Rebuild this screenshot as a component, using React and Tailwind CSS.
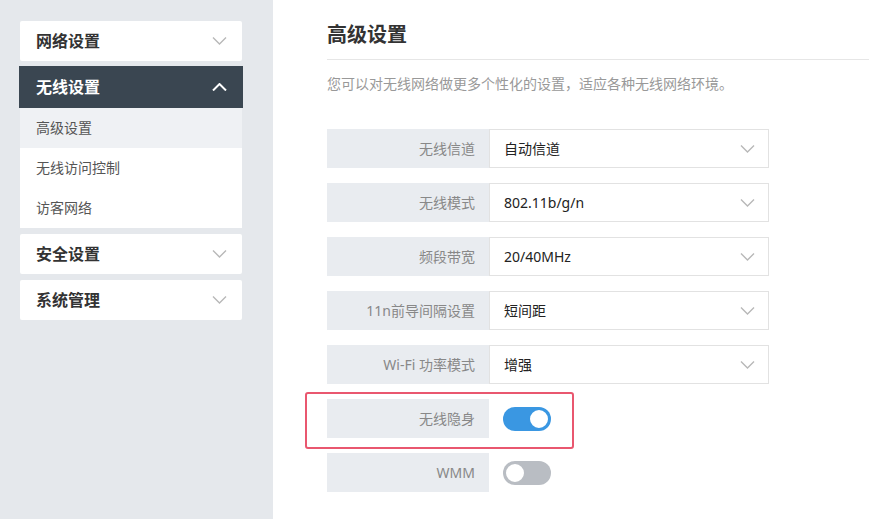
import React from 'react'

const Chevron = ({ up = false, color = '#b8b8b8' }) => (
  <svg width="15" height="8" viewBox="0 0 15 8" fill="none">
    <polyline
      points={up ? '1,7.5 7.5,1 14,7.5' : '1,0.5 7.5,7 14,0.5'}
      stroke={color}
      strokeWidth={up ? 2 : 1.4}
    />
  </svg>
)

const NavCard = ({ title, className = '' }) => (
  <div className={`flex h-[40px] items-center justify-between rounded-[2px] bg-white pl-[16px] pr-[15px] ${className}`}>
    <span className="text-[16px] font-bold leading-[22px] text-[#333]">{title}</span>
    <Chevron />
  </div>
)

const SelectRow = ({ label, value }) => (
  <div className="flex h-[39px]">
    <div className="flex w-[162px] items-center justify-end bg-[#e9ecf0] pr-[14px] text-[14px] text-[#888]">
      {label}
    </div>
    <div className="flex w-[280px] items-center justify-between border border-[#e2e2e2] pl-[14px] pr-[13px] text-[14px] text-[#222]">
      <span>{value}</span>
      <Chevron />
    </div>
  </div>
)

const Toggle = ({ on }) => (
  <div className={`flex h-[24px] w-[48px] items-center rounded-full p-px ${on ? 'justify-end bg-[#3a97e2]' : 'justify-start bg-[#b9bdc3]'}`}>
    <div className={`h-[22px] w-[22px] rounded-full border-2 bg-white ${on ? 'border-[#3a97e2]' : 'border-[#b9bdc3]'}`} />
  </div>
)

const ToggleRow = ({ label, on, highlight }) => (
  <div className="relative flex h-[39px]">
    {highlight && (
      <div className="absolute left-[-22px] top-[-7px] h-[57px] w-[269px] rounded-[3px] border-2 border-[#e9576f]" />
    )}
    <div className="flex w-[162px] items-center justify-end bg-[#e9ecf0] pr-[14px] text-[14px] text-[#888]">
      {label}
    </div>
    <div className="flex items-center pl-[14px]">
      <Toggle on={on} />
    </div>
  </div>
)

export default function App() {
  return (
    <div className="flex h-[519px] w-[869px] overflow-hidden bg-white font-['Noto_Sans','Noto_Sans_CJK_SC',sans-serif]">
      {/* sidebar */}
      <aside className="w-[273px] shrink-0 bg-[#e5e8ec] pl-[20px] pr-[31px] pt-[21px]">
        <NavCard title="网络设置" />
        <div className="-mx-px mt-[5px] flex h-[42px] items-center justify-between bg-[#3a4651] pl-[17px] pr-[16px]">
          <span className="text-[16px] font-bold leading-[22px] text-white">无线设置</span>
          <Chevron up color="#ffffff" />
        </div>
        <div className="bg-white text-[14px] leading-[20px] text-[#555]">
          <div className="flex h-[40px] items-center bg-[#eff1f4] pl-[16px]">高级设置</div>
          <div className="flex h-[40px] items-center pl-[16px]">无线访问控制</div>
          <div className="flex h-[40px] items-center pl-[16px]">访客网络</div>
        </div>
        <NavCard title="安全设置" className="mt-[6px]" />
        <NavCard title="系统管理" className="mt-[6px]" />
      </aside>

      {/* main */}
      <main className="flex-1 pl-[54px]">
        <div className="border-b border-[#e6e6e6] pb-[11px] pt-[22px]">
          <h1 className="text-[20px] font-bold leading-[26px] text-[#333]">高级设置</h1>
        </div>
        <p className="mt-[14px] text-[14px] leading-[20px] text-[#999]">
          您可以对无线网络做更多个性化的设置，适应各种无线网络环境。
        </p>
        <div className="mt-[35px] flex flex-col gap-[15px]">
          <SelectRow label="无线信道" value="自动信道" />
          <SelectRow label="无线模式" value="802.11b/g/n" />
          <SelectRow label="频段带宽" value="20/40MHz" />
          <SelectRow label="11n前导间隔设置" value="短间距" />
          <SelectRow label="Wi-Fi 功率模式" value="增强" />
          <ToggleRow label="无线隐身" on highlight />
          <ToggleRow label="WMM" on={false} />
        </div>
      </main>
    </div>
  )
}
